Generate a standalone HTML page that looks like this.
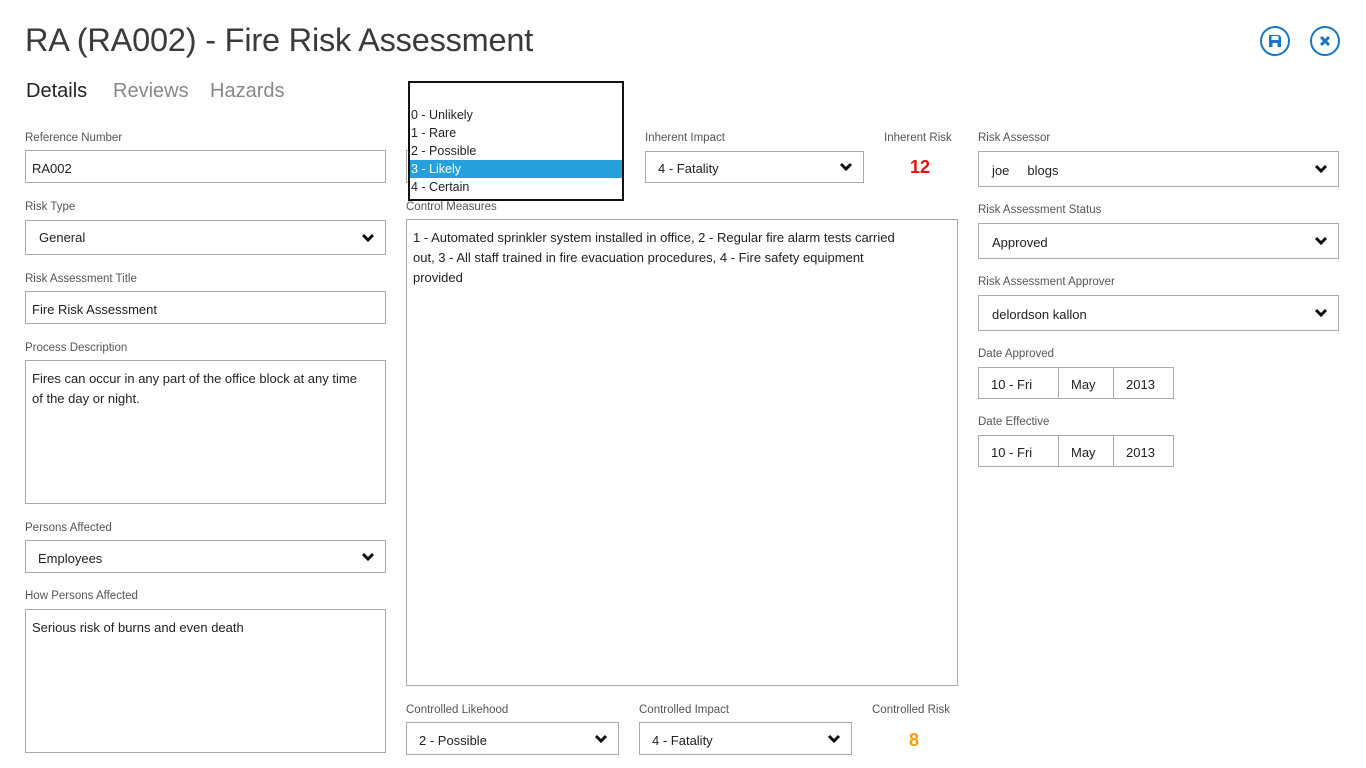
<!DOCTYPE html>
<html><head><meta charset="utf-8"><style>
*{box-sizing:border-box;margin:0;padding:0}
body{width:1366px;height:768px;background:#fff;font-family:"Liberation Sans",sans-serif;color:#222;position:relative;overflow:hidden}
.a{position:absolute}
.lbl{position:absolute;font-size:11.5px;color:#555;white-space:nowrap}
.box{position:absolute;border:1px solid #ababab;background:#fff;font-size:13px;color:#222;padding-left:12px;display:flex;align-items:center;white-space:nowrap}
.ta{position:absolute;border:1px solid #ababab;background:#fff;font-size:13px;color:#222;padding:8px 6px;line-height:20px}
.chev{position:absolute;right:10px;top:50%;margin-top:-5px;width:14px;height:10px}
</style></head><body>
<div class="a" style="left:25px;top:22px;font-size:32.5px;color:#3a3a3a;letter-spacing:-0.2px;white-space:nowrap;font-weight:normal">RA (RA002) - Fire Risk Assessment</div>
<svg class="a" style="left:1259px;top:25px" width="32" height="32" viewBox="0 0 32 32"><circle cx="16" cy="16" r="14" fill="none" stroke="#1a75c2" stroke-width="2"/><path d="M10 10h10l2 2v10H10z" fill="#1a75c2"/><rect x="12.5" y="11" width="7" height="4" fill="#fff"/><rect x="13.5" y="18" width="5" height="4" fill="#fff"/></svg>
<svg class="a" style="left:1309px;top:25px" width="32" height="32" viewBox="0 0 32 32"><circle cx="16" cy="16" r="14" fill="none" stroke="#1a75c2" stroke-width="2"/><path d="M12 12l8 8M20 12l-8 8" stroke="#1a75c2" stroke-width="3"/></svg>
<div class="a" style="left:26px;top:80px;font-size:20px;color:#222">Details</div>
<div class="a" style="left:113px;top:80px;font-size:20px;color:#888">Reviews</div>
<div class="a" style="left:210px;top:80px;font-size:20px;color:#888">Hazards</div>

<div class="lbl" style="left:25px;top:132px">Reference Number</div>
<div class="box" style="left:25px;top:150px;width:361px;height:33px;padding-left:6px;padding-top:4px">RA002</div>
<div class="lbl" style="left:25px;top:201px">Risk Type</div>
<div class="box" style="left:25px;top:220px;width:361px;height:35px;padding-left:13px">General<svg class="chev" viewBox="0 0 14 10"><path d="M2 2l5 5 5-5" fill="none" stroke="#111" stroke-width="3"/></svg></div>
<div class="lbl" style="left:25px;top:273px">Risk Assessment Title</div>
<div class="box" style="left:25px;top:291px;width:361px;height:33px;padding-left:6px;padding-top:3px">Fire Risk Assessment</div>
<div class="lbl" style="left:25px;top:342px">Process Description</div>
<div class="ta" style="left:25px;top:360px;width:361px;height:144px;padding-right:20px">Fires can occur in any part of the office block at any time of the day or night.</div>
<div class="lbl" style="left:25px;top:522px">Persons Affected</div>
<div class="box" style="left:25px;top:540px;width:361px;height:33px;padding-top:3px">Employees<svg class="chev" viewBox="0 0 14 10"><path d="M2 2l5 5 5-5" fill="none" stroke="#111" stroke-width="3"/></svg></div>
<div class="lbl" style="left:25px;top:590px">How Persons Affected</div>
<div class="ta" style="left:25px;top:609px;width:361px;height:144px">Serious risk of burns and even death</div>

<div class="a" style="left:406px;top:150px;width:213px;height:33px;border:1px solid #ababab"></div>
<div class="a" style="left:408px;top:81px;width:216px;height:120px;border:2px solid #111;background:#fff;font-size:12.5px;line-height:18px;padding-top:23px">
<div style="padding-left:1px">0 - Unlikely</div><div style="padding-left:1px">1 - Rare</div><div style="padding-left:1px">2 - Possible</div><div style="padding-left:1px;background:#26a0da;color:#fff">3 - Likely</div><div style="padding-left:1px">4 - Certain</div></div>
<div class="lbl" style="left:645px;top:132px">Inherent Impact</div>
<div class="box" style="left:645px;top:151px;width:219px;height:32px;padding-top:2px">4 - Fatality<svg class="chev" viewBox="0 0 14 10"><path d="M2 2l5 5 5-5" fill="none" stroke="#111" stroke-width="3"/></svg></div>
<div class="lbl" style="left:884px;top:132px">Inherent Risk</div>
<div class="a" style="left:910px;top:157px;font-size:18px;font-weight:bold;color:#e81010">12</div>
<div class="lbl" style="left:406px;top:201px">Control Measures</div>
<div class="ta" style="left:406px;top:219px;width:552px;height:467px;padding:8px 40px 8px 6px">1 - Automated sprinkler system installed in office, 2 - Regular fire alarm tests carried out, 3 - All staff trained in fire evacuation procedures, 4 - Fire safety equipment provided</div>
<div class="lbl" style="left:406px;top:704px">Controlled Likehood</div>
<div class="box" style="left:406px;top:722px;width:213px;height:33px;padding-top:3px">2 - Possible<svg class="chev" viewBox="0 0 14 10"><path d="M2 2l5 5 5-5" fill="none" stroke="#111" stroke-width="3"/></svg></div>
<div class="lbl" style="left:639px;top:704px">Controlled Impact</div>
<div class="box" style="left:639px;top:722px;width:213px;height:33px;padding-top:3px">4 - Fatality<svg class="chev" viewBox="0 0 14 10"><path d="M2 2l5 5 5-5" fill="none" stroke="#111" stroke-width="3"/></svg></div>
<div class="lbl" style="left:872px;top:704px">Controlled Risk</div>
<div class="a" style="left:909px;top:730px;font-size:18px;font-weight:bold;color:#f5a000">8</div>

<div class="lbl" style="left:978px;top:132px">Risk Assessor</div>
<div class="box" style="left:978px;top:151px;width:361px;height:36px;padding-left:13px;padding-top:3px">joe&nbsp;&nbsp;&nbsp;&nbsp;&nbsp;blogs<svg class="chev" viewBox="0 0 14 10"><path d="M2 2l5 5 5-5" fill="none" stroke="#111" stroke-width="3"/></svg></div>
<div class="lbl" style="left:978px;top:204px">Risk Assessment Status</div>
<div class="box" style="left:978px;top:223px;width:361px;height:36px;padding-left:13px;padding-top:3px">Approved<svg class="chev" viewBox="0 0 14 10"><path d="M2 2l5 5 5-5" fill="none" stroke="#111" stroke-width="3"/></svg></div>
<div class="lbl" style="left:978px;top:276px">Risk Assessment Approver</div>
<div class="box" style="left:978px;top:295px;width:361px;height:36px;padding-left:13px;padding-top:3px">delordson kallon<svg class="chev" viewBox="0 0 14 10"><path d="M2 2l5 5 5-5" fill="none" stroke="#111" stroke-width="3"/></svg></div>
<div class="lbl" style="left:978px;top:348px">Date Approved</div>
<div class="box" style="left:978px;top:367px;width:81px;height:32px;padding-top:3px">10 - Fri</div>
<div class="box" style="left:1058px;top:367px;width:56px;height:32px;padding-top:3px">May</div>
<div class="box" style="left:1113px;top:367px;width:61px;height:32px;padding-top:3px">2013</div>
<div class="lbl" style="left:978px;top:416px">Date Effective</div>
<div class="box" style="left:978px;top:435px;width:81px;height:32px;padding-top:3px">10 - Fri</div>
<div class="box" style="left:1058px;top:435px;width:56px;height:32px;padding-top:3px">May</div>
<div class="box" style="left:1113px;top:435px;width:61px;height:32px;padding-top:3px">2013</div>
</body></html>
